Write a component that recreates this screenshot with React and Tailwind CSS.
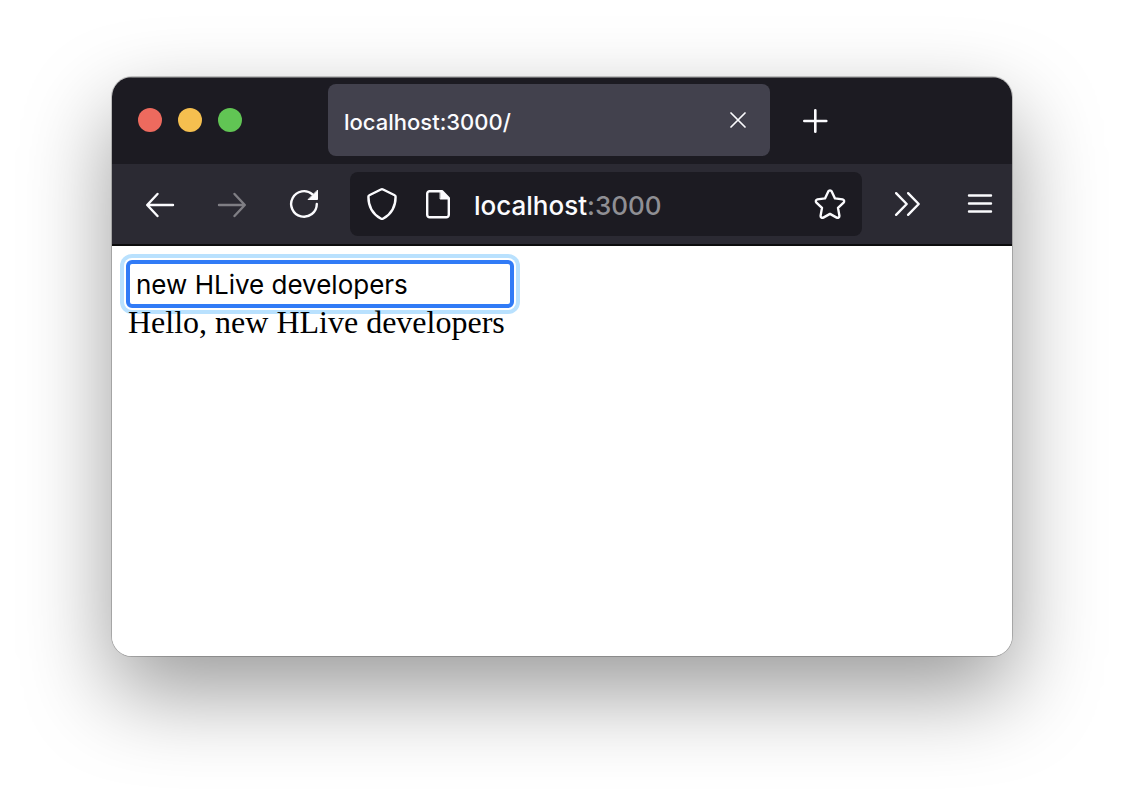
import { useState } from "react";

const stroke = {
  fill: "none",
  stroke: "currentColor",
  strokeWidth: 2.4,
  strokeLinecap: "round",
  strokeLinejoin: "round",
  "aria-hidden": true,
};

const BackIcon = () => (
  <svg className="size-8" viewBox="0 0 32 32" {...stroke}>
    <path d="M29 17H3.500M13.500 6 3.200 17 13.500 28" />
  </svg>
);

const ForwardIcon = () => (
  <svg className="size-8" viewBox="0 0 32 32" {...stroke}>
    <path d="M3 17h25.500M18.500 6l10.300 11-10.300 11" />
  </svg>
);

const ReloadIcon = () => (
  <svg className="size-8" viewBox="0 0 32 32" {...stroke}>
    <path d="M28.800 16A12.800 12.800 0 1 1 24.500 6.400" />
    <path d="M29.500 2.500v9h-9z" fill="currentColor" strokeWidth="1" />
  </svg>
);

const ShieldIcon = () => (
  <svg className="size-8 shrink-0" viewBox="0 0 32 32" {...stroke}>
    <path d="M14.900 1.500a2.400 2.400 0 0 1 2.200 0l11.600 5.800a1.500 1.500 0 0 1 .9 1.400C29.600 18.500 25.400 26 17.300 30.500a2.500 2.500 0 0 1-2.600 0C6.600 26 2.400 18.500 2.400 8.700a1.500 1.500 0 0 1 .9-1.400z" />
  </svg>
);

const PageIcon = () => (
  <svg className="size-8 shrink-0" viewBox="0 0 32 32" {...stroke}>
    <path d="M8 3.200h12L26.800 10v16.800a2.500 2.500 0 0 1-2.500 2.500H7.700a2.500 2.500 0 0 1-2.500-2.500V5.700A2.500 2.500 0 0 1 7.700 3.200" />
    <path d="M18.500 3.200h1.500L26.800 10v1h-8.300z" fill="currentColor" strokeWidth="1" />
  </svg>
);

const StarIcon = () => (
  <svg className="size-8" viewBox="0 0 32 32" {...stroke}>
    <path d="M14.300 3.400a1.900 1.900 0 0 1 3.400 0l3.300 7 7.600 1a1.900 1.900 0 0 1 1 3.200L24 19.900l1.400 7.700a1.900 1.900 0 0 1-2.700 2L16 25.900l-6.700 3.700a1.900 1.900 0 0 1-2.700-2L8 19.900l-5.600-5.300a1.900 1.900 0 0 1 1-3.200l7.600-1z" />
  </svg>
);

const OverflowIcon = () => (
  <svg className="size-8" viewBox="0 0 32 32" {...stroke}>
    <path d="m4.100 5.200 10.600 10.800L4.100 26.800M16.100 5.200l10.600 10.800-10.600 10.800" />
  </svg>
);

const MenuIcon = () => (
  <svg className="size-8" viewBox="0 0 32 32" {...stroke}>
    <path d="M6 7.500h22M6 15.500h22M6 23.500h22" />
  </svg>
);

const CloseIcon = () => (
  <svg className="size-4" viewBox="0 0 16 16" {...stroke} strokeWidth="1.700">
    <path d="m1 1 14 14M15 1 1 15" />
  </svg>
);

const PlusIcon = () => (
  <svg className="size-8" viewBox="0 0 32 32" {...stroke} strokeWidth="2.600">
    <path d="M16.300 6.300v21.400M5.300 17h22" />
  </svg>
);

function ToolButton({ label, className, children, ...rest }) {
  return (
    <button
      type="button"
      aria-label={label}
      className={`flex h-16 shrink-0 items-center justify-center ${className}`}
      {...rest}
    >
      {children}
    </button>
  );
}

function TitleBar() {
  return (
    <header className="flex items-end border-t border-[#68686b] bg-[#1c1b22] pt-1.5 pb-2 pl-[26px]">
      <div className="mr-[86px] flex h-[72px] shrink-0 items-center gap-4">
        <button type="button" aria-label="Close window" className="size-6 rounded-full bg-[#ed6a5e]" />
        <button type="button" aria-label="Minimize window" className="size-6 rounded-full bg-[#f5bf4f]" />
        <button type="button" aria-label="Zoom window" className="size-6 rounded-full bg-[#61c554]" />
      </div>
      <div className="flex h-[72px] min-w-0 flex-1 items-center justify-between rounded-lg bg-[#42414d] pr-6 pl-4">
        <span className="truncate pt-1 text-[22px] leading-8 font-medium">localhost:3000/</span>
        <button type="button" aria-label="Close tab">
          <CloseIcon />
        </button>
      </div>
      <ToolButton label="New tab" className="mr-[152px] w-[90px] self-center">
        <PlusIcon />
      </ToolButton>
    </header>
  );
}

function Toolbar() {
  return (
    <nav className="flex items-center border-b-2 border-[#0c0c0d] bg-[#2b2a33] py-2 pl-3">
      <ToolButton label="Back" className="w-[72px]">
        <BackIcon />
      </ToolButton>
      <ToolButton label="Forward" className="w-[72px] text-[#7f7e84]" disabled>
        <ForwardIcon />
      </ToolButton>
      <ToolButton label="Reload" className="w-[72px]">
        <ReloadIcon />
      </ToolButton>
      <div className="ml-2.5 flex h-16 min-w-0 flex-1 items-center rounded-lg bg-[#1c1b22] px-4">
        <ShieldIcon />
        <span className="w-6 shrink-0" />
        <PageIcon />
        <div
          role="textbox"
          aria-label="Address"
          contentEditable
          suppressContentEditableWarning
          spellCheck={false}
          className="ml-5 min-w-0 flex-1 truncate pt-1 text-[26px] leading-9 font-medium outline-none"
        >
          localhost<span className="text-[#8f8f94]">:3000</span>
        </div>
        <button type="button" aria-label="Bookmark this page">
          <StarIcon />
        </button>
      </div>
      <ToolButton label="More tools" className="ml-2 w-[76px]">
        <OverflowIcon />
      </ToolButton>
      <ToolButton label="Open application menu" className="w-[66px]">
        <MenuIcon />
      </ToolButton>
    </nav>
  );
}

export default function App() {
  const [name, setName] = useState("new HLive developers");

  return (
    <div className="flex min-h-screen bg-white px-28 pt-[77px] pb-[148px] font-[Inter,sans-serif]">
      <div className="flex min-w-0 flex-1 flex-col rounded-[20px] shadow-[0_0_0_1px_rgba(0,0,0,0.2),0_36px_88px_rgba(0,0,0,0.4)]">
        <div className="flex flex-1 flex-col overflow-hidden rounded-[20px] bg-white text-[#fbfbfe]">
          <TitleBar />
          <Toolbar />
          <main className="flex flex-1 flex-col items-start px-3.5 pt-3.5 text-black">
            <input
              type="text"
              aria-label="Name"
              value={name}
              spellCheck={false}
              onChange={(e) => setName(e.target.value)}
              className="h-12 w-[388px] max-w-full rounded-md border-4 border-[#317bf6] bg-white px-1.5 text-[26px] shadow-[0_0_0_2px_#fff,0_0_0_6px_#b9e1fe] outline-none"
            />
            <p className="relative pl-0.5 font-['Liberation_Serif',serif] text-[32px] leading-7">
              Hello, {name}
            </p>
          </main>
        </div>
      </div>
    </div>
  );
}
